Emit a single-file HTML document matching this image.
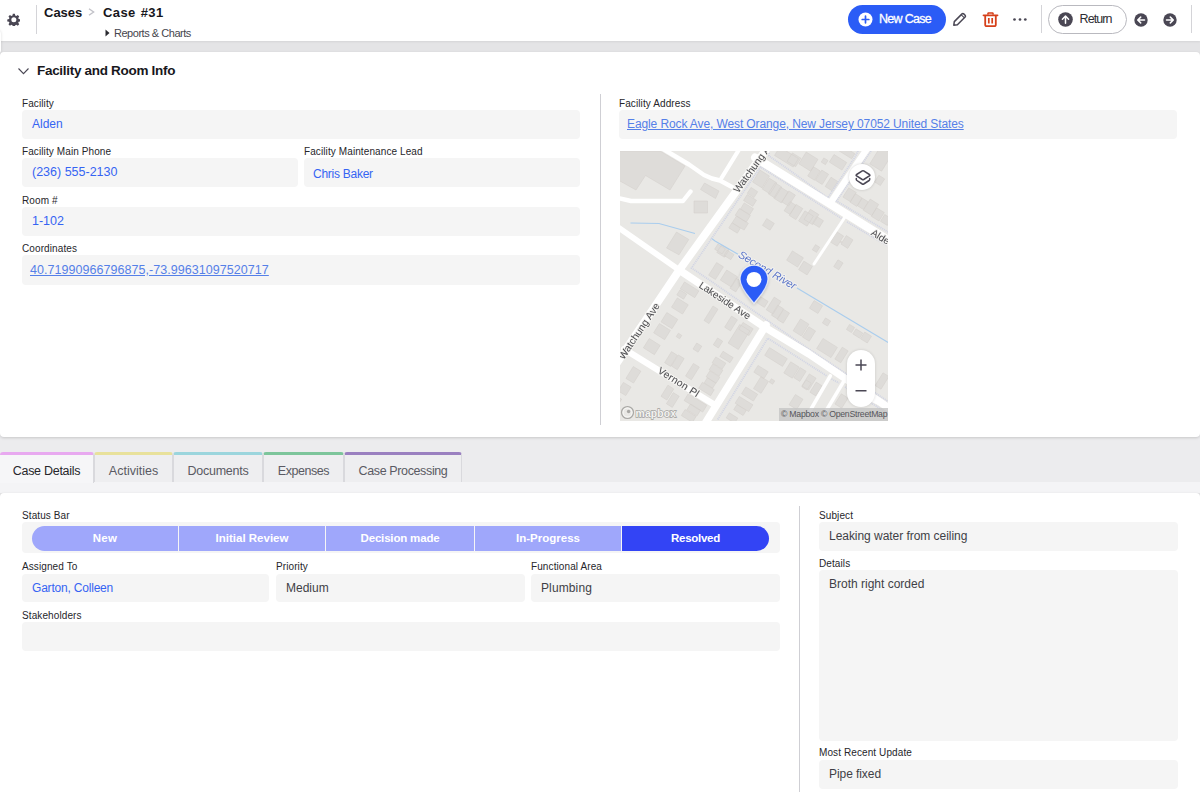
<!DOCTYPE html>
<html lang="en">
<head>
<meta charset="utf-8">
<title>Case #31</title>
<style>
*{box-sizing:border-box;margin:0;padding:0}
html,body{width:1200px;height:798px;overflow:hidden}
body{background:#e4e4e6;font-family:"Liberation Sans",Arial,sans-serif;color:#2d2d33;position:relative}
.abs{position:absolute}
#hdr{position:absolute;left:0;top:0;width:1200px;height:41px;background:#fff;box-shadow:0 1px 2px rgba(0,0,0,.07)}
.vsep{position:absolute;width:1px;background:#d4d4d8}
.card{position:absolute;left:0;width:1200px;background:#fff;border-radius:4px;box-shadow:0 1px 3px rgba(0,0,0,.16)}
.lbl{position:absolute;font-size:10px;line-height:12px;color:#26262b;white-space:nowrap;letter-spacing:.1px;margin-top:2px}
.box{position:absolute;background:#f5f5f5;border-radius:4px}
.val{position:absolute;font-size:12px;line-height:16px;white-space:nowrap;color:#3f3f46}
.blue{color:#3564f3}
.lnk{color:#5580e8;text-decoration:underline}
.tab{position:absolute;top:452px;height:30px;background:#eeeef0;border:1px solid #d9d9dd;border-bottom:none;border-top:3px solid #ccc;font-size:12.5px;line-height:16px;color:#5a5a63;text-align:center;padding-top:8px;border-radius:3px 3px 0 0}
.seg{position:absolute;top:526px;height:25px;background:#9fa7fb;color:#fff;font-weight:bold;font-size:11.5px;line-height:25px;text-align:center}
.num{font-size:12.5px}
</style>
</head>
<body>
<!-- HEADER -->
<div class="abs" style="left:0;top:430px;width:1200px;height:52px;background:#ececee"></div>
<div class="abs" style="left:0;top:482px;width:1200px;height:11px;background:#f4f4f6"></div>
<div id="hdr"></div>
<div class="abs" style="left:-7px;top:30px;width:8px;height:24px;border-radius:4px;background:#fff;box-shadow:0 0 3px rgba(0,0,0,.14)"></div>
<!-- gear -->
<svg class="abs" style="left:6.500px;top:12.700px" width="13.700" height="13.700" viewBox="0 0 24 24"><path fill="#4a4754" fill-rule="evenodd" d="M10.2 1.5h3.6l.6 3 1.9.8 2.6-1.7 2.5 2.5-1.7 2.6.8 1.9 3 .6v3.6l-3 .6-.8 1.9 1.7 2.6-2.5 2.5-2.6-1.7-1.9.8-.6 3h-3.6l-.6-3-1.9-.8-2.6 1.7-2.5-2.5 1.700-2.600-.8-1.900-3-.6v-3.600l3-.6.8-1.900-1.700-2.600 2.500-2.500 2.600 1.700 1.900-.8zM12 7.600a4.400 4.400 0 1 0 0 8.800 4.400 4.400 0 0 0 0-8.800z"/></svg>
<div class="vsep" style="left:36px;top:5px;height:29px"></div>
<div class="abs" id="t-cases" style="left:44px;top:5px;font-size:13px;line-height:16px;font-weight:bold;color:#17171c;white-space:nowrap">Cases</div>
<svg class="abs" style="left:88px;top:8px" width="7" height="8" viewBox="0 0 7 8"><path d="M1 0.800 L5.600 4 L1 7.200" fill="none" stroke="#c2c2c8" stroke-width="1.400"/></svg>
<div class="abs" id="t-case31" style="left:103px;top:5px;letter-spacing:.4px;word-spacing:1px;font-size:13px;line-height:16px;font-weight:bold;color:#17171c;white-space:nowrap">Case #31</div>
<svg class="abs" style="left:105px;top:29px" width="5" height="8" viewBox="0 0 5 8"><path d="M0.500 0.500 L4.500 4 L0.500 7.500z" fill="#2a2a30"/></svg>
<div class="abs" id="t-reports" style="left:114px;top:27px;font-size:11px;line-height:12px;color:#45454d;white-space:nowrap;letter-spacing:-.47px">Reports &amp; Charts</div>
<!-- New Case button -->
<div class="abs" style="left:848px;top:5px;width:98px;height:29px;border-radius:15px;background:#2b5cf6"></div>
<svg class="abs" style="left:858.300px;top:12px" width="15" height="15" viewBox="0 0 15 15"><circle cx="7.500" cy="7.500" r="7" fill="#fff"/><path d="M7.500 4.200v6.600M4.200 7.500h6.600" stroke="#2b5cf6" stroke-width="1.700" stroke-linecap="round"/></svg>
<div class="abs" id="t-newcase" style="-webkit-text-stroke:.3px #fff;left:879px;top:11px;font-size:12.500px;line-height:16px;color:#fff;white-space:nowrap;letter-spacing:-.7px">New Case</div>
<!-- pencil -->
<svg class="abs" style="left:952px;top:12px" width="15" height="15" viewBox="0 0 15 15"><path d="M1.800 13.200 L2.300 9.600 L10 1.900 a1.200 1.200 0 0 1 1.700 0 L13.100 3.300 a1.200 1.200 0 0 1 0 1.700 L5.400 12.700 Z" fill="none" stroke="#4a4754" stroke-width="1.500" stroke-linejoin="round"/><path d="M9.300 2.800 L12.200 5.700" stroke="#4a4754" stroke-width="1.100"/></svg>
<!-- trash -->
<svg class="abs" style="left:982px;top:11px" width="17" height="17" viewBox="0 0 17 17"><path d="M1.500 4.300h14" stroke="#d6401a" stroke-width="1.800" stroke-linecap="round"/><path d="M5.600 3.600 L6.300 1.900 h4.400 L11.400 3.600" fill="none" stroke="#d6401a" stroke-width="1.500" stroke-linejoin="round"/><path d="M3.200 5 v8.800 a1.400 1.400 0 0 0 1.400 1.400 h7.800 a1.400 1.400 0 0 0 1.400 -1.400 V5" fill="none" stroke="#d6401a" stroke-width="1.800"/><path d="M6.800 7v5.500M10.200 7v5.500" stroke="#d6401a" stroke-width="1.700"/></svg>
<!-- ellipsis -->
<svg class="abs" style="left:1012px;top:17px" width="16" height="5" viewBox="0 0 16 5"><circle cx="2.500" cy="2.500" r="1.350" fill="#4a4754"/><circle cx="8" cy="2.500" r="1.350" fill="#4a4754"/><circle cx="13.300" cy="2.500" r="1.350" fill="#4a4754"/></svg>
<div class="vsep" style="left:1041px;top:5px;height:28px"></div>
<!-- Return -->
<div class="abs" style="left:1048px;top:5px;width:79px;height:29px;border-radius:15px;border:1px solid #b9b9bf;background:#fff"></div>
<svg class="abs" style="left:1058px;top:12px" width="15" height="15" viewBox="0 0 15 15"><circle cx="7.500" cy="7.500" r="7.300" fill="#4a4754"/><path d="M7.500 11.300V4.300M4.400 7.300 L7.500 4.100 L10.600 7.300" fill="none" stroke="#fff" stroke-width="1.500" stroke-linecap="round" stroke-linejoin="round"/></svg>
<div class="abs" id="t-return" style="left:1079.500px;top:11px;font-size:12.500px;line-height:16px;color:#2d2d33;white-space:nowrap;letter-spacing:-.9px">Return</div>
<svg class="abs" style="left:1134px;top:13px" width="14" height="14" viewBox="0 0 14 14"><circle cx="7" cy="7" r="6.700" fill="#4a4754"/><path d="M10.500 7H3.800M6.700 4.100 L3.700 7 L6.700 9.900" fill="none" stroke="#fff" stroke-width="1.500" stroke-linecap="round" stroke-linejoin="round"/></svg>
<svg class="abs" style="left:1163px;top:13px" width="14" height="14" viewBox="0 0 14 14"><circle cx="7" cy="7" r="6.700" fill="#4a4754"/><path d="M3.500 7H10.200M7.300 4.100 L10.300 7 L7.300 9.900" fill="none" stroke="#fff" stroke-width="1.500" stroke-linecap="round" stroke-linejoin="round"/></svg>
<div class="vsep" style="left:1191px;top:5px;height:28px"></div>
<div id="card1" class="card" style="top:52px;height:385px"></div>
<svg class="abs" style="left:17px;top:67px" width="14" height="9" viewBox="0 0 14 9"><path d="M1.500 1.500 L6.500 6.700 L11.500 1.500" fill="none" stroke="#4a4754" stroke-width="1.100"/></svg>
<div class="abs" id="t-sec" style="left:37px;top:62px;font-size:13.500px;line-height:18px;font-weight:bold;letter-spacing:-.3px;color:#17171c;white-space:nowrap">Facility and Room Info</div>
<div class="lbl" style="left:22px;top:96px">Facility</div>
<div class="box" style="left:22px;top:110px;width:558px;height:29px"></div>
<div class="val blue" style="left:32px;top:116px">Alden</div>
<div class="lbl" style="left:22px;top:144px">Facility Main Phone</div>
<div class="box" style="left:22px;top:158px;width:276px;height:29px"></div>
<div class="val blue num" style="left:32px;top:164px">(236) 555-2130</div>
<div class="lbl" style="left:304px;top:144px">Facility Maintenance Lead</div>
<div class="box" style="left:304px;top:158px;width:276px;height:29px"></div>
<div class="val blue" style="left:313px;top:166px;letter-spacing:-0.26px">Chris Baker</div>
<div class="lbl" style="left:22px;top:193px">Room #</div>
<div class="box" style="left:22px;top:207px;width:558px;height:29px"></div>
<div class="val blue num" style="left:32px;top:213px">1-102</div>
<div class="lbl" style="left:22px;top:241px">Coordinates</div>
<div class="box" style="left:22px;top:255px;width:558px;height:30px"></div>
<div class="val lnk num" style="left:30px;top:262px;letter-spacing:0.05px">40.71990966796875,-73.99631097520717</div>
<div class="vsep" style="left:600px;top:94px;height:331px;background:#cfcfd4"></div>
<div class="lbl" style="left:619px;top:96px">Facility Address</div>
<div class="box" style="left:619px;top:110px;width:558px;height:29px"></div>
<div class="val lnk" style="left:627px;top:116px;letter-spacing:-0.108px">Eagle Rock Ave, West Orange, New Jersey 07052 United States</div>
<!--MAP-->
<svg class="abs" style="left:620px;top:151px" width="268" height="270" viewBox="1 0 268 270">
<defs><filter id="mb" x="-5%" y="-5%" width="110%" height="110%"><feGaussianBlur stdDeviation=".35"/></filter></defs><g filter="url(#mb)">
<rect x="0" y="0" width="270" height="270" fill="#e9e8e5"/>
<g fill="#dedcd9" stroke="#d2cfcb" stroke-width=".5">
<path d="M0 0 L41 0 L66 15 L51 39 L26.5 24.5 L17 39 L0 29.5Z M85.5 32 L100 40 L96.5 47.5 L81.5 38.5Z M75 50 H88.5 V62 H75Z M57.5 81 L69.8 88.5 L60 103.8 L47.5 97Z M141.0 19.1 L150.4 25.0 L143.0 36.9 L133.6 31.0Z M150.2 27.1 L157.9 31.9 L151.0 42.9 L143.3 38.1Z M156.1 31.8 L162.8 36.0 L155.9 47.0 L149.2 42.8Z M161.6 36.1 L169.3 40.9 L162.4 51.9 L154.7 47.1Z M169.7 39.9 L176.4 44.1 L169.5 55.1 L162.8 50.9Z M170.9 50.5 L176.9 54.2 L171.1 63.5 L165.1 59.8Z M177.1 53.4 L183.8 57.6 L176.9 68.6 L170.2 64.4Z M185.9 59.8 L194.4 65.1 L188.1 75.2 L179.6 69.9Z M132.0 36.4 L138.7 40.7 L135.0 46.6 L128.3 42.3Z M128.2 43.5 L137.5 49.3 L133.8 55.3 L124.5 49.5Z M125.2 51.9 L134.5 57.7 L130.8 63.7 L121.5 57.9Z M120.4 57.6 L131.4 64.5 L127.2 71.2 L116.2 64.3Z M117.5 64.9 L129.4 72.3 L125.1 79.1 L113.2 71.7Z M112.9 71.8 L121.4 77.1 L118.3 82.2 L109.8 76.9Z M147.7 67.6 L155.3 72.4 L151.1 79.2 L143.5 74.4Z M98.8 93.1 L106.4 97.8 L103.2 102.9 L95.6 98.2Z M160.8 -4.1 L179.5 7.6 L174.2 16.1 L155.5 4.4Z M173.4 1.9 L181.9 7.2 L176.6 15.7 L168.1 10.4Z M187.2 1.0 L199.0 8.4 L191.6 20.2 L179.8 12.8Z M204.8 6.9 L209.0 9.5 L206.4 13.7 L202.2 11.1Z M215.0 3.5 L227.7 11.5 L223.0 19.1 L210.3 11.1Z M222.3 -5.8 L235.9 2.7 L232.7 7.8 L219.1 -0.7Z M194.5 15.7 L201.3 20.0 L195.5 29.3 L188.7 25.0Z M202.8 19.1 L209.6 23.3 L203.2 33.5 L196.4 29.3Z M212.0 26.2 L218.8 30.5 L213.0 39.8 L206.2 35.5Z M261.4 -4.2 L273.2 3.2 L262.6 20.2 L250.8 12.8Z M259.8 24.2 L265.7 27.9 L261.4 34.6 L255.5 30.9Z M229.7 36.8 L237.3 41.5 L231.5 50.8 L223.9 46.1Z M236.3 42.6 L243.0 46.9 L237.7 55.4 L231.0 51.1Z M243.2 47.1 L249.2 50.8 L244.4 58.5 L238.4 54.8Z M251.2 48.1 L259.7 53.4 L252.8 64.5 L244.3 59.2Z M257.6 56.8 L265.3 61.5 L260.0 70.0 L252.3 65.3Z M265.7 63.5 L272.5 67.7 L268.3 74.5 L261.5 70.3Z M191.4 58.3 L199.9 63.6 L193.6 73.7 L185.1 68.4Z M197.7 65.5 L204.5 69.7 L200.3 76.5 L193.5 72.3Z M217.8 80.8 L224.6 85.0 L218.2 95.2 L211.4 91.0Z M227.3 84.6 L234.0 88.9 L228.7 97.4 L222.0 93.1Z M196.5 93.6 L200.7 96.3 L197.5 101.4 L193.3 98.7Z M219.0 108.8 L224.1 112.0 L219.8 118.8 L214.7 115.6Z M221.8 90.3 L222.7 90.8 L222.2 91.7 L221.3 91.2Z M102.6 93.8 L110.2 98.6 L105.4 106.2 L97.8 101.4Z M108.2 99.3 L115.0 103.6 L111.8 108.7 L105.0 104.4Z M97.6 111.5 L104.4 115.8 L96.4 128.5 L89.6 124.2Z M107.7 119.0 L118.7 125.9 L112.3 136.0 L101.3 129.1Z M117.2 127.1 L123.1 130.8 L116.8 140.9 L110.9 137.2Z M141.4 145.6 L149.1 150.4 L145.4 156.4 L137.7 151.6Z M155.2 146.1 L162.0 150.4 L154.0 163.1 L147.2 158.8Z M158.7 154.1 L164.6 157.8 L158.3 167.9 L152.4 164.2Z M164.6 158.4 L170.5 162.1 L164.2 172.2 L158.3 168.5Z M173.4 99.9 L184.4 106.8 L178.6 116.1 L167.6 109.2Z M184.9 110.1 L193.4 115.4 L188.1 123.9 L179.6 118.6Z M181.5 167.9 L189.9 173.2 L182.5 185.1 L174.1 179.8Z M189.8 175.8 L196.6 180.0 L190.2 190.2 L183.4 186.0Z M195.1 149.5 L203.6 154.8 L198.9 162.5 L190.4 157.2Z M206.5 166.9 L211.6 170.0 L208.5 175.1 L203.4 172.0Z M230.5 173.4 L235.6 176.5 L232.5 181.6 L227.4 178.5Z M237.0 177.8 L243.8 182.1 L240.6 187.2 L233.8 182.9Z M245.7 181.0 L252.5 185.2 L248.3 192.0 L241.5 187.8Z M204.0 187.4 L218.4 196.4 L212.0 206.6 L197.6 197.6Z M223.2 196.2 L229.2 199.9 L221.8 211.8 L215.8 208.1Z M264.0 221.8 L269.9 225.5 L262.0 238.2 L256.1 234.5Z M65.5 130.9 L79.9 139.9 L75.7 146.7 L61.3 137.7Z M61.0 138.8 L67.8 143.1 L64.6 148.2 L57.8 143.9Z M58.3 146.9 L69.3 153.8 L63.5 163.1 L52.5 156.2Z M47.8 161.5 L58.8 168.4 L53.0 177.7 L42.0 170.8Z M40.4 172.5 L51.4 179.4 L45.6 188.7 L34.6 181.8Z M59.4 182.2 L62.8 184.4 L60.6 187.8 L57.2 185.6Z M94.0 155.0 L99.0 158.2 L90.0 172.6 L85.0 169.4Z M112.5 165.1 L118.4 168.8 L111.5 179.9 L105.6 176.2Z M120.7 173.5 L130.9 179.9 L119.3 198.5 L109.1 192.1Z M124.0 171.4 L134.2 177.8 L130.0 184.6 L119.8 178.2Z M98.6 187.0 L103.7 190.2 L99.4 197.0 L94.3 193.8Z M104.0 200.3 L114.2 206.6 L111.0 211.7 L100.8 205.4Z M30.2 187.5 L41.2 194.4 L35.4 203.7 L24.4 196.8Z M77.7 192.0 L82.8 195.2 L79.1 201.2 L74.0 198.0Z M52.5 200.6 L58.4 204.3 L51.5 215.4 L45.6 211.7Z M59.3 203.9 L65.2 207.6 L58.3 218.7 L52.4 215.0Z M74.4 212.4 L80.3 216.1 L72.4 228.8 L66.5 225.1Z M96.8 205.9 L106.9 212.2 L103.2 218.1 L93.1 211.8Z M93.8 212.9 L103.9 219.2 L100.2 225.1 L90.1 218.8Z M90.8 219.9 L100.9 226.2 L97.2 232.1 L87.1 225.8Z M88.3 226.8 L96.8 232.1 L93.7 237.2 L85.2 231.9Z M83.4 231.3 L95.3 238.7 L91.6 244.7 L79.7 237.3Z M14.3 215.5 L21.9 220.2 L14.5 232.1 L6.9 227.4Z M4.4 231.4 L12.1 236.1 L6.8 244.6 L-0.9 239.9Z M48.9 234.2 L54.8 237.9 L47.9 249.0 L42.0 245.3Z M54.3 241.6 L60.2 245.3 L53.3 256.4 L47.4 252.7Z M69.3 242.7 L87.9 254.3 L83.7 261.1 L65.1 249.5Z M71.5 252.9 L81.6 259.2 L77.9 265.1 L67.8 258.8Z M66.0 258.6 L77.1 265.5 L73.4 271.4 L62.3 264.5Z M-2.4 245.0 L2.7 248.2 L-1.6 255.0 L-6.7 251.8Z M150.5 196.6 L168.3 207.7 L163.5 215.4 L145.7 204.3Z M171.7 210.8 L180.2 216.1 L173.3 227.2 L164.8 221.9Z M181.2 216.6 L187.1 220.3 L180.8 230.4 L174.9 226.7Z M139.0 214.4 L149.2 220.8 L145.0 227.6 L134.8 221.2Z M141.9 225.7 L149.5 230.4 L142.1 242.3 L134.5 237.6Z M152.4 227.7 L155.8 229.9 L153.6 233.3 L150.2 231.1Z M126.8 235.9 L138.7 243.3 L134.4 250.1 L122.5 242.7Z M120.3 245.4 L133.9 253.8 L129.7 260.6 L116.1 252.2Z M117.9 253.5 L127.3 259.4 L124.1 264.5 L114.7 258.6Z M176.4 243.5 L184.0 248.3 L177.6 258.5 L170.0 253.7Z M187.1 229.0 L192.2 232.2 L187.9 239.0 L182.8 235.8Z M190.3 222.9 L197.1 227.2 L189.7 239.1 L182.9 234.8Z M197.2 231.1 L203.1 234.8 L196.8 244.9 L190.9 241.2Z M222.3 242.8 L229.1 247.0 L222.7 257.2 L215.9 253.0Z M110.3 261.8 L118.8 267.1 L115.7 272.2 L107.2 266.9Z"/>
</g>
<g fill="none" stroke="#a9cdee" stroke-width="1.100"><path d="M11.500 72 L40 72.500 L76 82.500"/><path d="M92 87 L96 90 L119 103.200"/><path d="M178 137 L270 192"/></g>
<g fill="none" stroke="#d2d5e4" stroke-width="1.800" stroke-dasharray="1.100 .9">
<path d="M98.750 268.500 L148.750 187.250 L207.500 224.750 M212.500 228 L220 232 M226 236 L270 263 M270 251 L226 222 L177.500 189.750 L90 128.750 L72.500 117 L141.500 16 L170 34 L222.500 67.500 M228 71 L270 95.500 M150 -2 L150 5 L170 18.750 L208.750 46.900 L236 6 L240 -2 M252 0 L217.500 50 L270 81.500"/>
</g>
<g fill="none" stroke="#fff" stroke-linecap="round" stroke-linejoin="round">
<path d="M150.500 -6 L60.500 118.8 L-3.500 214" stroke-width="7.8"/>
<path d="M-5 73.5 L60 118.8 " stroke-width="5.8"/>
<path d="M60 118.8 L146 176.3 L190 203 L275 260.500" stroke-width="7.4"/>
<path d="M136 6.500 L145 12 L170 27.500 L245 74 L275 92.500" stroke-width="8"/>
<path d="M250 -5 L212 51" stroke-width="6.5"/>
<path d="M226 66 L195 113" stroke-width="3"/>
<path d="M42.500 -3 L70 13.5 L85 24 L93 27.5 L101 29.5 L113 36" stroke-width="4.4"/>
<path d="M121 -3 L102.5 27" stroke-width="4.2"/>
<path d="M-3 46.5 L12 50 L64 50 L71.5 40.5" stroke-width="4.4"/>
<path d="M5 198 L95 253.5" stroke-width="6.2"/>
<path d="M147 174 L84 276" stroke-width="7.6"/>
<path d="M211.3 224.8 L188 265" stroke-width="3.6"/>
<path d="M225 229.8 L204 265" stroke-width="3.6"/>
<path d="M255 250 L275 258" stroke-width="4"/>
</g>
<text x="20" y="180" dy=".35em" text-anchor="middle" transform="rotate(-56 20 180)" font-family="Liberation Sans,Arial,sans-serif" font-size="10.25" fill="#4b4b4f" stroke="#f4f3f0" stroke-width="1.800" paint-order="stroke" letter-spacing="0" >Watchung Ave</text>
<text x="116.5" y="40.5" dy=".35em" text-anchor="start" transform="rotate(-54 116.5 40.5)" font-family="Liberation Sans,Arial,sans-serif" font-size="10.25" fill="#4b4b4f" stroke="#f4f3f0" stroke-width="1.800" paint-order="stroke" letter-spacing="0" >Watchung Ave</text>
<text x="106" y="149.5" dy=".35em" text-anchor="middle" transform="rotate(33.5 106 149.5)" font-family="Liberation Sans,Arial,sans-serif" font-size="10" fill="#4b4b4f" stroke="#f4f3f0" stroke-width="1.800" paint-order="stroke" letter-spacing="0" >Lakeside Ave</text>
<text x="59.7" y="231" dy=".35em" text-anchor="middle" transform="rotate(32.5 59.7 231)" font-family="Liberation Sans,Arial,sans-serif" font-size="10.3" fill="#4b4b4f" stroke="#f4f3f0" stroke-width="1.800" paint-order="stroke" letter-spacing="0.25" >Vernon Pl</text>
<text x="253" y="80.5" dy=".35em" text-anchor="start" transform="rotate(31.7 253 80.5)" font-family="Liberation Sans,Arial,sans-serif" font-size="10" fill="#4b4b4f" stroke="#f4f3f0" stroke-width="1.800" paint-order="stroke" letter-spacing="0" >Alden St</text>
<text x="148.5" y="119" dy=".35em" text-anchor="middle" transform="rotate(30.5 148.5 119)" font-family="Liberation Sans,Arial,sans-serif" font-size="10.9" fill="#5a74c8" stroke="#f4f3f0" stroke-width="1.800" paint-order="stroke" letter-spacing="0" font-style="italic">Second River</text>
</g></svg>
<!-- layers button -->
<div class="abs" style="left:849px;top:164px;width:26px;height:26px;border-radius:13px;background:#fff;box-shadow:0 0 3px rgba(0,0,0,.18)"></div>
<svg class="abs" style="left:854.500px;top:168.700px" width="16" height="18" viewBox="0 0 16 18"><path d="M7.300 1.900 Q8 1.500 8.700 1.900 L14.400 5.500 Q15.400 6.200 14.400 6.900 L8.700 10.500 Q8 10.900 7.300 10.500 L1.600 6.900 Q0.600 6.200 1.600 5.500 Z" fill="none" stroke="#4a4754" stroke-width="1.500" stroke-linejoin="round"/><path d="M1.300 9.600 V10.600 Q1.300 11.100 1.900 11.500 L7.300 15 Q8 15.400 8.700 15 L14.100 11.500 Q14.700 11.100 14.700 10.600 V9.600" fill="none" stroke="#4a4754" stroke-width="1.500" stroke-linejoin="round" stroke-linecap="round"/></svg>
<!-- pin -->
<svg class="abs" style="left:735px;top:261px" width="38" height="46" viewBox="0 0 38 46"><path d="M19 42.500 C16 38 5 28 5 18.200 A14 14 0 0 1 33 18.200 C33 28 22 38 19 42.500Z" fill="#2b5cf6" stroke="rgba(250,250,250,.8)" stroke-width="1.300" style="filter:drop-shadow(0 1px 1.500px rgba(0,0,0,.18))"/><circle cx="19" cy="18.400" r="7.500" fill="#fff"/></svg>
<!-- zoom control -->
<div class="abs" style="left:847px;top:350px;width:28px;height:57px;border-radius:14px;background:#fff;box-shadow:0 0 3px rgba(0,0,0,.15)"></div>
<svg class="abs" style="left:855px;top:359px" width="12" height="40" viewBox="0 0 12 40"><path d="M0.500 6H11.500M6 0.500V11.500M0.500 31.700H11.500" stroke="#4a4754" stroke-width="1.500" fill="none"/></svg>
<!-- mapbox logo -->
<svg class="abs" style="left:620px;top:405px" width="60" height="15" viewBox="0 0 60 15"><circle cx="7.500" cy="7.500" r="5.800" fill="#e9e8e5" fill-opacity=".6" stroke="#a9a8a5" stroke-width="1.600"/><circle cx="7.500" cy="7.500" r="4.600" fill="none" stroke="#f7f7f5" stroke-width="1.200"/><circle cx="8.600" cy="6.500" r="1.700" fill="#a9a8a5"/><text x="15.500" y="11.500" font-family="Liberation Sans,Arial,sans-serif" font-weight="bold" font-size="10.400" fill="#f4f4f2" stroke="#a3a29f" stroke-width="1.300" paint-order="stroke" letter-spacing=".15">mapbox</text></svg>
<!-- attribution -->
<div class="abs" style="left:779px;top:408px;width:109px;height:13px;background:rgba(196,196,196,.78);font-size:8.700px;line-height:13px;color:#55555a;white-space:nowrap;padding-left:2px;letter-spacing:-.25px;overflow:hidden">© Mapbox © OpenStreetMap</div>
<!--/MAP-->
<!-- tabs -->
<div class="tab" style="left:0;width:94px;border-top-color:#e8a9f0;background:#f6f6f8;color:#26262b;border-left:none;height:31px;letter-spacing:-0.28px">Case Details</div>
<div class="tab" style="left:94px;width:79px;border-top-color:#e8e19b">Activities</div>
<div class="tab" style="left:173px;width:90px;border-top-color:#9bd5dd;letter-spacing:-0.24px">Documents</div>
<div class="tab" style="left:263px;width:81px;border-top-color:#7dc59b;letter-spacing:-0.44px">Expenses</div>
<div class="tab" style="left:344px;width:118px;border-top-color:#9a80c0;letter-spacing:-0.37px">Case Processing</div>
<div id="card2" class="card" style="top:493px;height:320px"></div>
<div class="lbl" style="left:22px;top:508px">Status Bar</div>
<div class="box" style="left:22px;top:522px;width:758px;height:31px"></div>
<div class="seg" style="left:32px;width:146px;border-radius:13px 0 0 13px;letter-spacing:0.3px">New</div>
<div class="seg" style="left:179px;width:146px">Initial Review</div>
<div class="seg" style="left:326px;width:148px;letter-spacing:-0.17px">Decision made</div>
<div class="seg" style="left:475px;width:146px">In-Progress</div>
<div class="seg" style="left:622px;width:147px;border-radius:0 13px 13px 0;background:#3344f5;letter-spacing:-0.27px">Resolved</div>
<div class="lbl" style="left:22px;top:559px">Assigned To</div>
<div class="box" style="left:22px;top:574px;width:247px;height:28px"></div>
<div class="val blue" style="left:32px;top:580px;letter-spacing:-0.2px">Garton, Colleen</div>
<div class="lbl" style="left:276px;top:559px">Priority</div>
<div class="box" style="left:276px;top:574px;width:249px;height:28px"></div>
<div class="val" style="left:286px;top:580px">Medium</div>
<div class="lbl" style="left:531px;top:559px">Functional Area</div>
<div class="box" style="left:531px;top:574px;width:249px;height:28px"></div>
<div class="val" style="left:541px;top:580px;letter-spacing:0.12px">Plumbing</div>
<div class="lbl" style="left:22px;top:608px">Stakeholders</div>
<div class="box" style="left:22px;top:622px;width:758px;height:29px"></div>
<div class="vsep" style="left:799px;top:506px;height:286px;background:#cfcfd4"></div>
<div class="lbl" style="left:819px;top:508px">Subject</div>
<div class="box" style="left:819px;top:522px;width:359px;height:29px"></div>
<div class="val" style="left:829px;top:528px;letter-spacing:-0.04px">Leaking water from ceiling</div>
<div class="lbl" style="left:819px;top:556px">Details</div>
<div class="box" style="left:819px;top:570px;width:359px;height:171px"></div>
<div class="val" style="left:829px;top:576px">Broth right corded</div>
<div class="lbl" style="left:819px;top:745px">Most Recent Update</div>
<div class="box" style="left:819px;top:760px;width:359px;height:29px"></div>
<div class="val" style="left:829px;top:766px;letter-spacing:-0.07px">Pipe fixed</div>
</body>
</html>
